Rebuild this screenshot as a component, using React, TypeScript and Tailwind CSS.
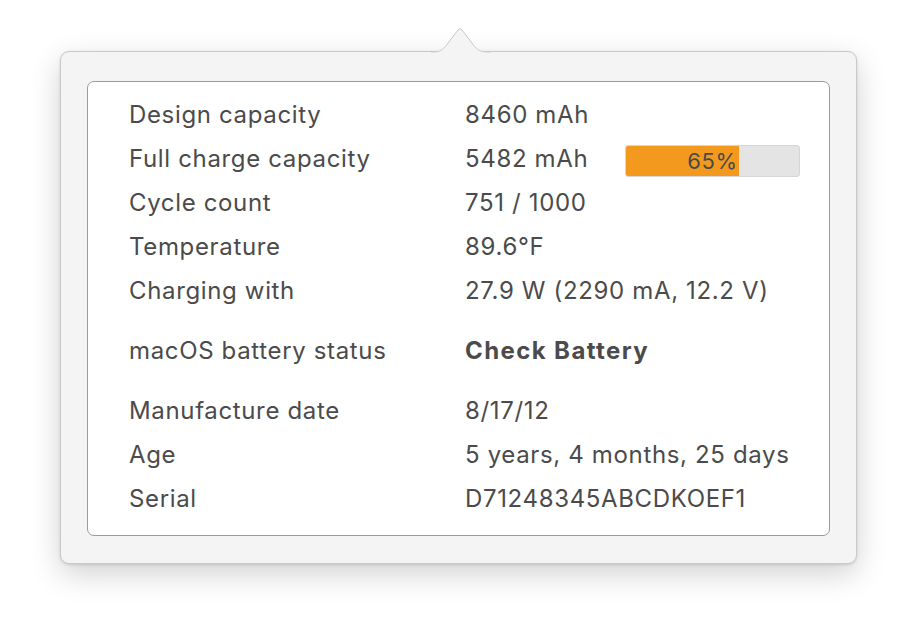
const rows1 = [
  ["Design capacity", "8460 mAh"],
  ["Full charge capacity", "5482 mAh"],
  ["Cycle count", "751 / 1000"],
  ["Temperature", "89.6°F"],
  ["Charging with", "27.9 W (2290 mA, 12.2 V)"],
];

const rows3 = [
  ["Manufacture date", "8/17/12"],
  ["Age", "5 years, 4 months, 25 days"],
  ["Serial", "D71248345ABCDKOEF1"],
];

function Row({ label, value, bold, children }: { label: string; value: string; bold?: boolean; children?: React.ReactNode }) {
  return (
    <div className="flex h-[44px] items-center">
      <div className="w-[336px] shrink-0">{label}</div>
      <div className={bold ? "font-bold tracking-[1.4px]" : ""}>{value}</div>
      {children}
    </div>
  );
}

function CapacityBar({ percent }: { percent: number }) {
  return (
    <div className="ml-[37px] mt-[4px] relative h-[32px] w-[175px] overflow-hidden rounded-[3px] border border-[#d6d6d6] bg-[#e4e4e4]">
      <div
        className="flex h-full items-center justify-end bg-[#f39a1e] pr-[1px] text-[22px] text-[#4a4a4a]"
        style={{ width: `${percent}%` }}
      >
        {percent}%
      </div>
    </div>
  );
}

export default function App() {
  return (
    <div className="min-h-screen bg-white pl-[60px] pt-[51px] text-[#4b4b4b]" style={{ fontFamily: "Inter, 'Noto Sans', sans-serif" }}>
      <div className="relative w-[797px] rounded-[9px] border border-[#c9c9c9] bg-[#f4f4f4] px-[26px] pb-[27px] pt-[29px] shadow-[0_10px_30px_rgba(0,0,0,0.18),0_1px_3px_rgba(0,0,0,0.12)]">
        {/* arrow */}
        <svg className="absolute left-[370px] top-[-25px]" width="60" height="26" viewBox="0 0 60 26">
          <path d="M0 25 C8 25 10 24 14 20 L27 3 Q29 0.5 31 3 L44 20 C48 24 50 25 60 25 L60 26 L0 26 Z" fill="#f4f4f4" />
          <path d="M0 25 C8 25 10 24 14 20 L27 3 Q29 0.5 31 3 L44 20 C48 24 50 25 60 25" fill="none" stroke="#c9c9c9" strokeWidth="1" />
        </svg>
        <div className="rounded-[7px] border-[1.5px] border-[#9a9a9a] bg-white pb-[14px] pl-[41px] pt-[11px] text-[24px] tracking-[0.65px]">
          {rows1.map(([l, v], i) => (
            <Row key={l} label={l} value={v}>
              {i === 1 && <CapacityBar percent={65} />}
            </Row>
          ))}
          <div className="mt-[16px]">
            <Row label="macOS battery status" value="Check Battery" bold />
          </div>
          <div className="mt-[16px]">
            {rows3.map(([l, v]) => (
              <Row key={l} label={l} value={v} />
            ))}
          </div>
        </div>
      </div>
    </div>
  );
}
